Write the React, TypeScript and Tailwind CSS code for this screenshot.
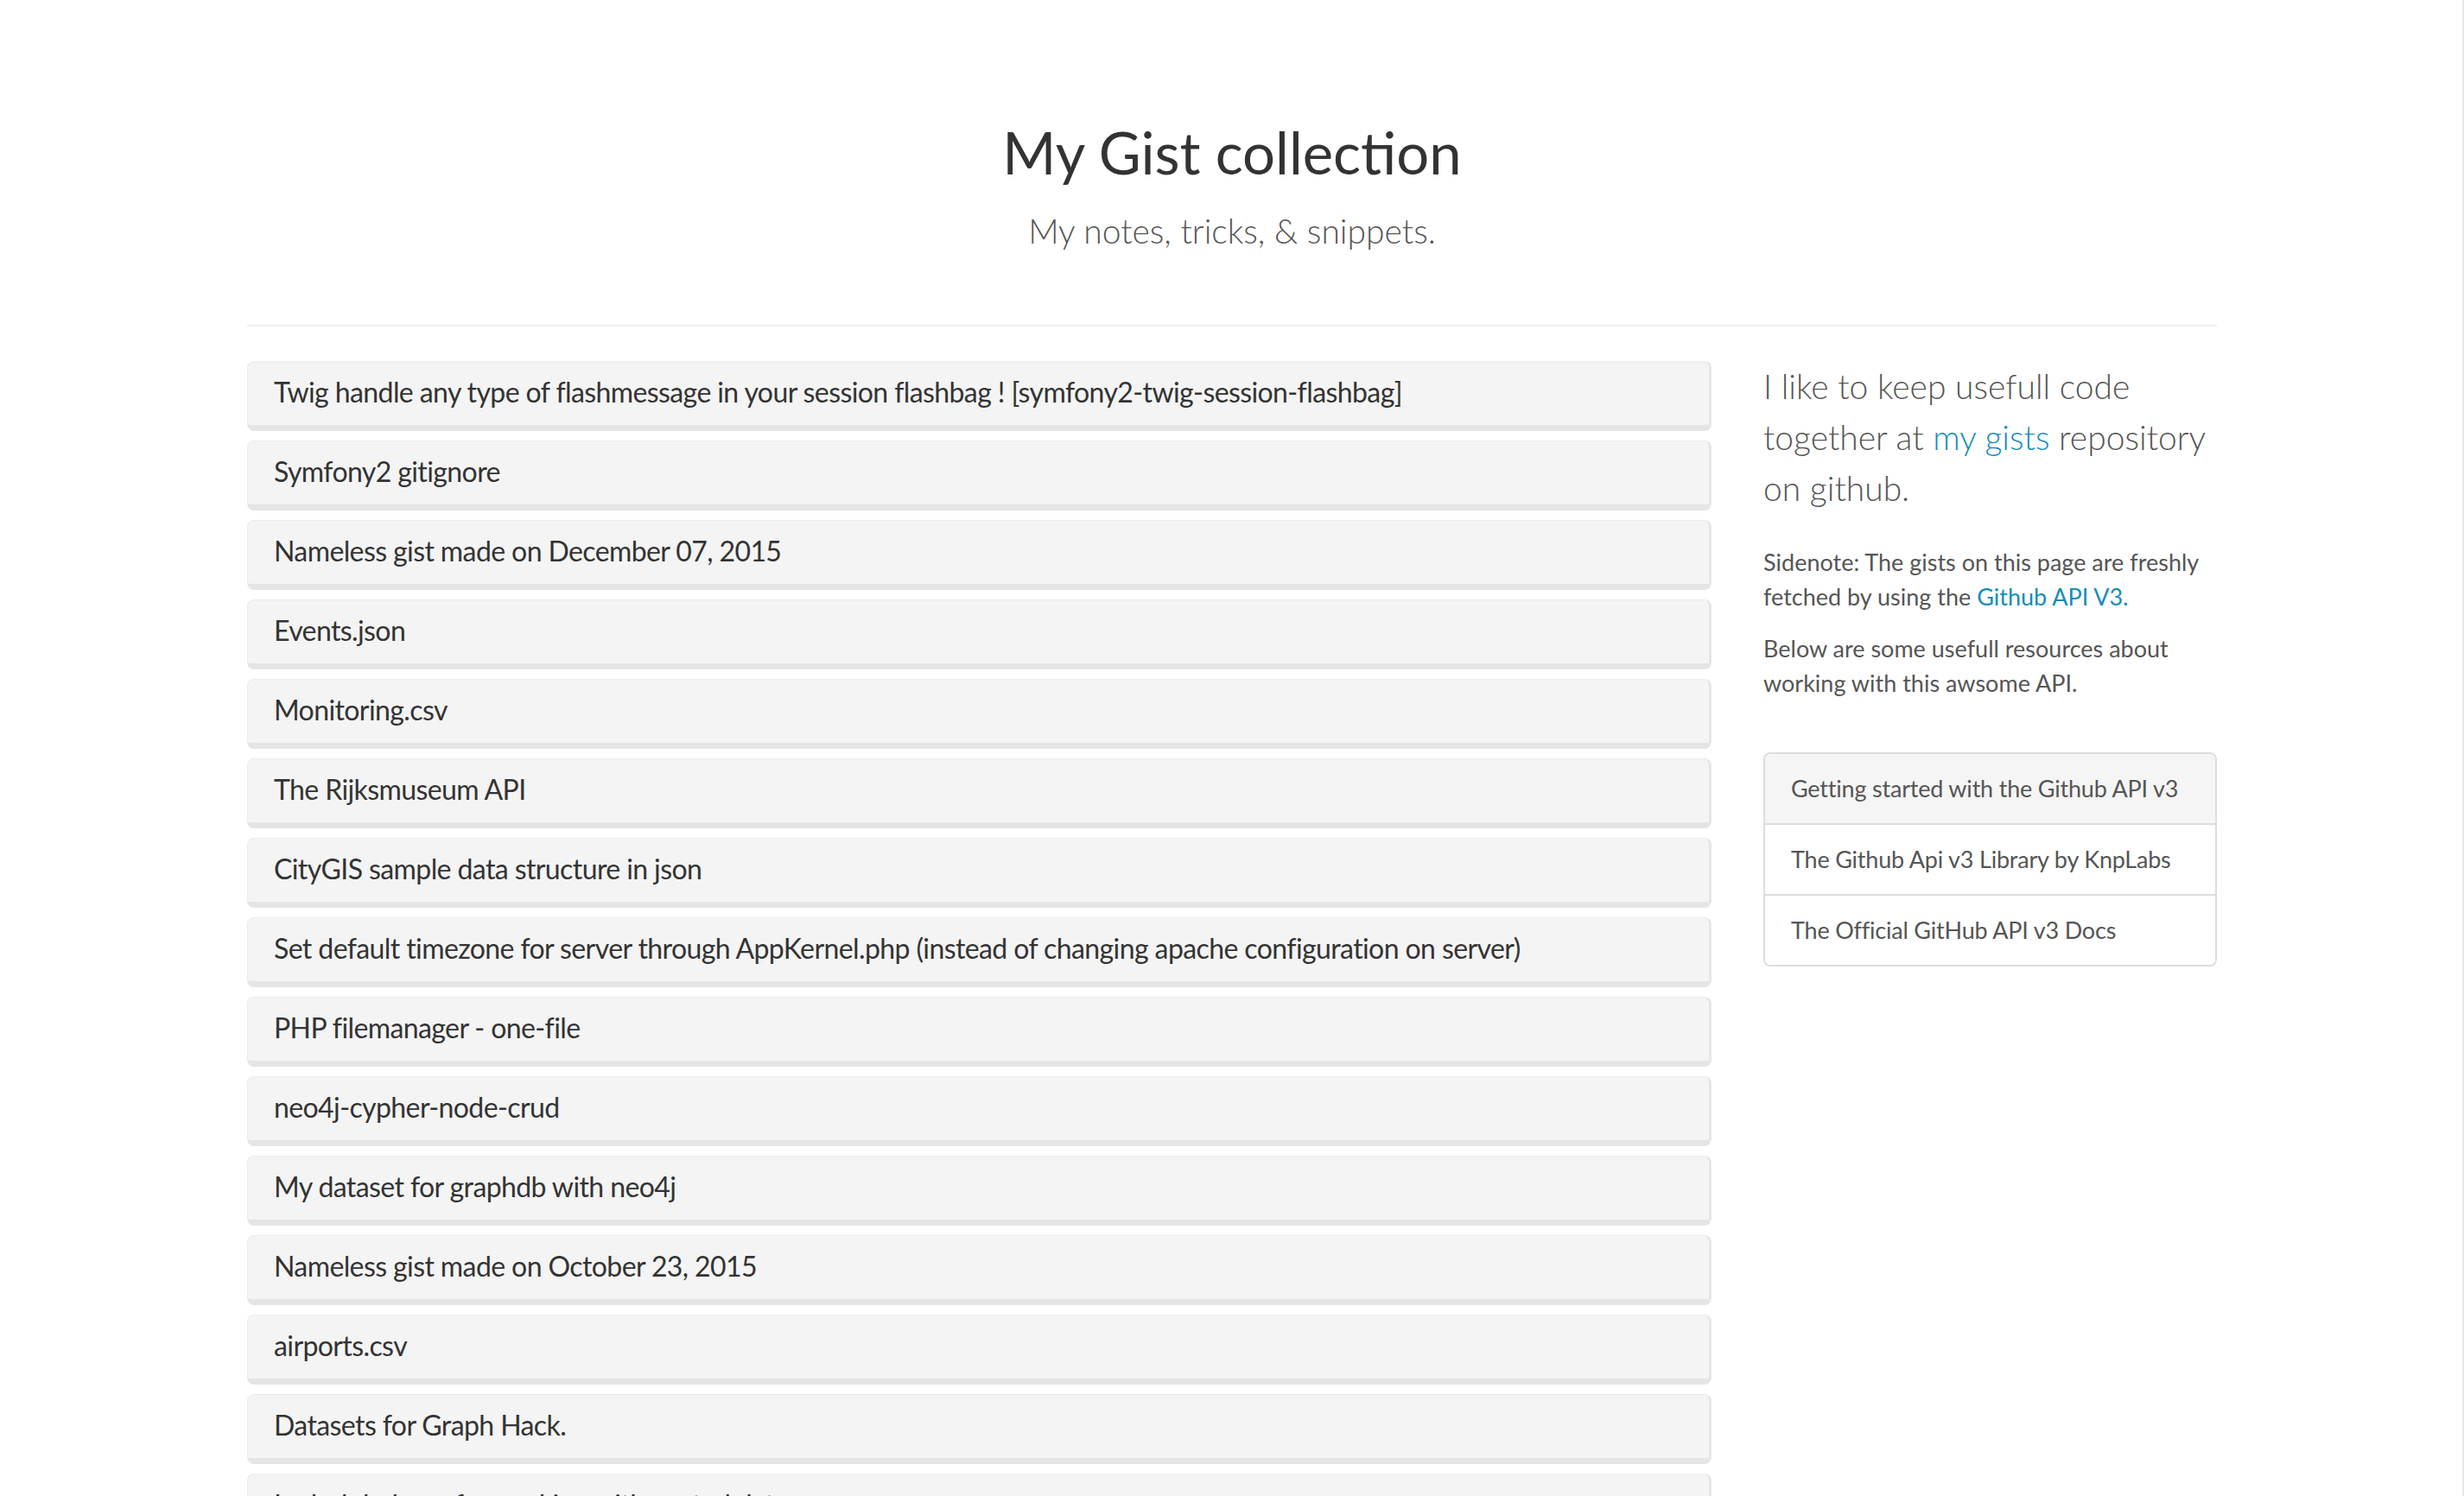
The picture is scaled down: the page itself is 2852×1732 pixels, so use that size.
const gists = [
  'Twig handle any type of flashmessage in your session flashbag ! [symfony2-twig-session-flashbag]',
  'Symfony2 gitignore',
  'Nameless gist made on December 07, 2015',
  'Events.json',
  'Monitoring.csv',
  'The Rijksmuseum API',
  'CityGIS sample data structure in json',
  'Set default timezone for server through AppKernel.php (instead of changing apache configuration on server)',
  'PHP filemanager - one-file',
  'neo4j-cypher-node-crud',
  'My dataset for graphdb with neo4j',
  'Nameless gist made on October 23, 2015',
  'airports.csv',
  'Datasets for Graph Hack.',
  'Lodash helpers for working with nested data',
];

const resources = [
  'Getting started with the Github API v3',
  'The Github Api v3 Library by KnpLabs',
  'The Official GitHub API v3 Docs',
];

export default function App() {
  return (
    <div className="h-[1732px] overflow-hidden bg-white font-['Lato','Liberation_Sans',sans-serif] text-[#555]">
      <div className="mx-auto w-[2340px] px-[30px]">
        {/* Header */}
        <header className="border-b-2 border-[#eee] pt-[139px] pb-[80px] text-center">
          <h1 className="text-[67px] leading-[75px] font-normal text-[#333]">My Gist collection</h1>
          <p className="mt-[24px] text-[39px] leading-[58px] font-light text-[#555]">
            My notes, tricks, &amp; snippets.
          </p>
        </header>

        <div className="mt-[40px] grid grid-cols-[1695px_525px] gap-[60px]">
          {/* Gist list */}
          <div className="flex flex-col gap-[11px]">
            {gists.map((title, index) => (
              <a
                key={index}
                href="#"
                className="block rounded-lg border-t border-l border-[#ececec] border-r-[3px] border-r-[#e6e6e6] border-b-[7px] border-b-[#e5e5e5] bg-[#f4f4f4] pt-[15px] pb-[18px] pl-[30px] pr-[30px] text-[32px] leading-[40px] tracking-[-0.6px] text-[#333]"
              >
                {title}
              </a>
            ))}
          </div>

          {/* Sidebar */}
          <aside>
            <p className="text-[39px] leading-[59px] font-light text-[#555]">
              I like to keep usefull code together at{' '}
              <a href="#" className="text-[#158cba]">my gists</a> repository on github.
            </p>
            <p className="mt-[36px] text-[27px] leading-[40px]">
              Sidenote: The gists on this page are freshly fetched by using the{' '}
              <a href="#" className="text-[#158cba]">Github API V3.</a>
            </p>
            <p className="mt-[20px] text-[27px] leading-[40px]">
              Below are some usefull resources about working with this awsome API.
            </p>

            <div className="mt-[60px] overflow-hidden rounded-lg border-2 border-[#ddd]">
              {resources.map((label, index) => (
                <a
                  key={index}
                  href="#"
                  className={`block whitespace-nowrap px-[30px] py-[20px] text-[27px] leading-[40px] tracking-[-0.2px] text-[#555] ${
                    index === 0 ? 'bg-[#f5f5f5]' : 'border-t-2 border-[#ddd] bg-white'
                  }`}
                >
                  {label}
                </a>
              ))}
            </div>
          </aside>
        </div>
      </div>
      <div className="fixed top-0 right-0 h-full w-[2px] bg-[#e8e8e8]" />
    </div>
  );
}
